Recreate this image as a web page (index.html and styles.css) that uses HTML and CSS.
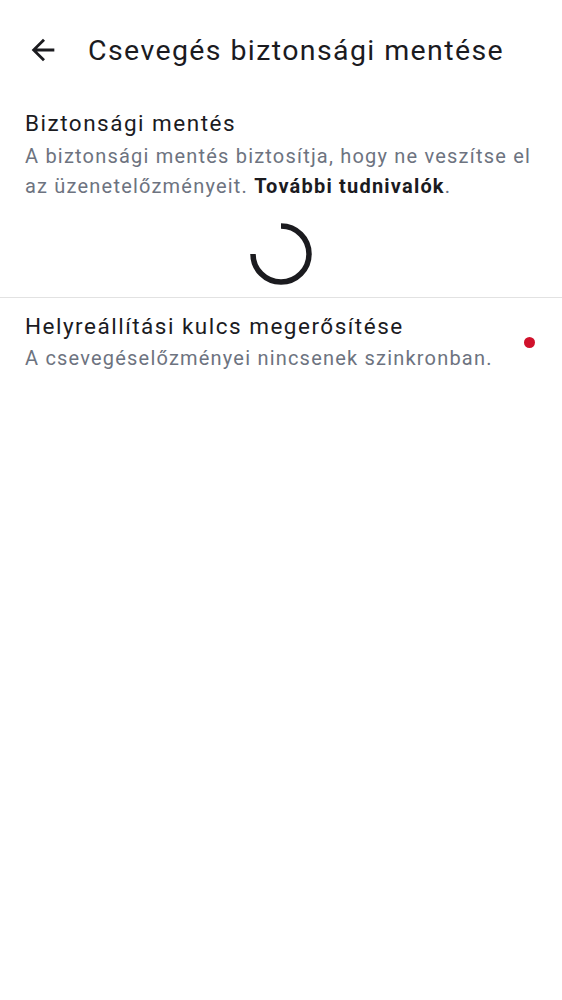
FILE: index.html
```html
<!DOCTYPE html>
<html lang="hu">
<head>
<meta charset="utf-8">
<link rel="stylesheet" href="styles.css">
</head>
<body>
<header class="appbar">
  <button class="back" aria-label="Vissza">
    <svg width="34" height="34" viewBox="0 0 24 24"><path d="M20 11H7.83l5.59-5.59L12 4l-8 8 8 8 1.41-1.41L7.83 13H20v-2z" fill="#1b1b1f"/></svg>
  </button>
  <h1 class="title">Csevegés biztonsági mentése</h1>
</header>
<section class="item">
  <div class="item-title">Biztonsági mentés</div>
  <div class="item-sub">A biztonsági mentés biztosítja, hogy ne veszítse el az üzenetelőzményeit. <b class="link">További tudnivalók</b>.</div>
</section>
<div class="spinner-wrap">
  <svg width="62" height="62" viewBox="0 0 62 62"><path d="M31 3 A28 28 0 1 1 3 31" fill="none" stroke="#1b1b1f" stroke-width="5.5"/></svg>
</div>
<hr class="divider">
<section class="item row">
  <div class="texts">
    <div class="item-title">Helyreállítási kulcs megerősítése</div>
    <div class="item-sub">A csevegéselőzményei nincsenek szinkronban.</div>
  </div>
  <span class="dot"></span>
</section>
</body>
</html>
```
FILE: styles.css
```css
html, body { margin: 0; padding: 0; background: #fff; }
body { font-family: Roboto, "Noto Sans", sans-serif; color: #1b1b1f; }
.appbar { display: flex; align-items: center; height: 100px; box-sizing: border-box; padding: 0 0 0 26px; }
.back { background: none; border: 0; padding: 0; width: 34px; height: 34px; display: flex; align-items: center; margin-right: 28px; }
.title { font-size: 28.5px; font-weight: 400; margin: 0; letter-spacing: 1.4px; color: #1b1b1f; }
.item { padding: 8px 25px 0; }
.item-title { font-size: 22.5px; line-height: 30px; letter-spacing: 1.5px; color: #1b1b1f; }
.item-sub { font-size: 20px; line-height: 30px; letter-spacing: 1.2px; color: #6d7380; margin-top: 3px; }
.link { color: #1b1b1f; font-weight: 700; letter-spacing: 1.2px; }
.spinner-wrap { display: flex; justify-content: center; padding: 22px 0 12px; }
.divider { border: 0; border-top: 1px solid #e2e2e2; margin: 0; }
.row { display: flex; align-items: center; padding-top: 13px; padding-right: 27px; }
.texts { flex: 1; }
.row .item-sub { margin-top: 2px; }
.dot { width: 11px; height: 11px; border-radius: 50%; background: #d0112b; }
```
